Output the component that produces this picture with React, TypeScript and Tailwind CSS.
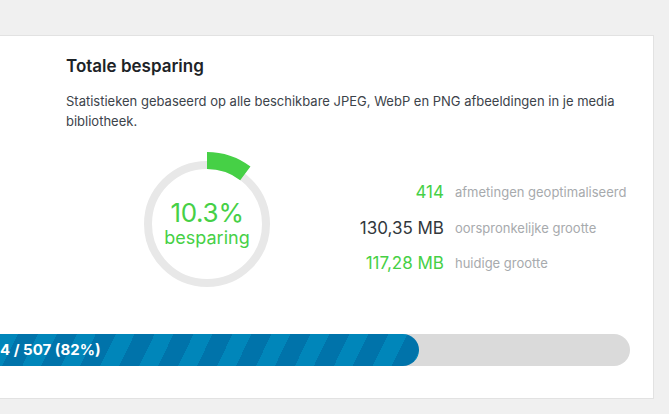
import React from 'react';

const stats = [
  { value: '414', label: 'afmetingen geoptimaliseerd', color: 'text-[#46d046]' },
  { value: '130,35 MB', label: 'oorspronkelijke grootte', color: 'text-[#32373c]' },
  { value: '117,28 MB', label: 'huidige grootte', color: 'text-[#46d046]' },
];

function SavingsRing({ percent }: { percent: number }) {
  const r = 63.5;
  const c = 2 * Math.PI * r;
  return (
    <div className="relative w-[144px] h-[144px] shrink-0">
      <svg width="144" height="144" viewBox="0 0 144 144">
        <circle cx="72" cy="72" r="59" fill="none" stroke="#e8e8e8" strokeWidth="8" />
        <circle
          cx="72"
          cy="72"
          r={r}
          fill="none"
          stroke="#46d046"
          strokeWidth="17"
          strokeDasharray={`${(c * percent) / 100} ${c}`}
          transform="rotate(-90 72 72)"
        />
      </svg>
      <div className="absolute inset-0 flex flex-col items-center justify-center text-[#46d046]">
        <span className="text-[26px] leading-[28px] tracking-[-0.3px]">{percent}%</span>
        <span className="text-[18px] leading-[22px]">besparing</span>
      </div>
    </div>
  );
}

export default function App() {
  return (
    <div className="w-[669px] h-[414px] bg-[#f0f0f0] overflow-hidden pt-[35px] font-[Inter,'Noto_Sans',sans-serif]">
      <div className="ml-[-60px] w-[714px] h-[364px] bg-white border border-[#e2e2e2]">
        <div className="pl-[125px] pt-[18px]">
          <h2 className="text-[17px] leading-[24px] font-semibold text-[#1d2327]">Totale besparing</h2>
          <p className="mt-[13px] w-[560px] text-[13px] leading-[20px] text-[#3c434a]">
            Statistieken gebaseerd op alle beschikbare JPEG, WebP en PNG afbeeldingen in je media bibliotheek.
          </p>
          <div className="mt-[21px] flex items-start">
            <div className="ml-[69px]">
              <SavingsRing percent={10.3} />
            </div>
            <div className="ml-[55px] mt-[23px] flex flex-col">
              {stats.map((s) => (
                <div key={s.label} className="flex items-center h-[35.5px]">
                  <span className={`w-[110px] text-right text-[17px] ${s.color}`}>{s.value}</span>
                  <span className="ml-[11px] text-[13px] text-[#a7aaad]">{s.label}</span>
                </div>
              ))}
            </div>
          </div>
        </div>
        <div className="mt-[38px] ml-[19px] mr-[23px] h-[32px] rounded-full bg-[#dadada] overflow-hidden">
          <div className="w-[459px] h-full rounded-full bg-[repeating-linear-gradient(116deg,#0086ba_0px,#0086ba_17px,#0073aa_17px,#0073aa_35px)] pl-[24px] text-[15px] leading-[32px] font-bold text-white">
            414 / 507 (82%)
          </div>
        </div>
      </div>
    </div>
  );
}
